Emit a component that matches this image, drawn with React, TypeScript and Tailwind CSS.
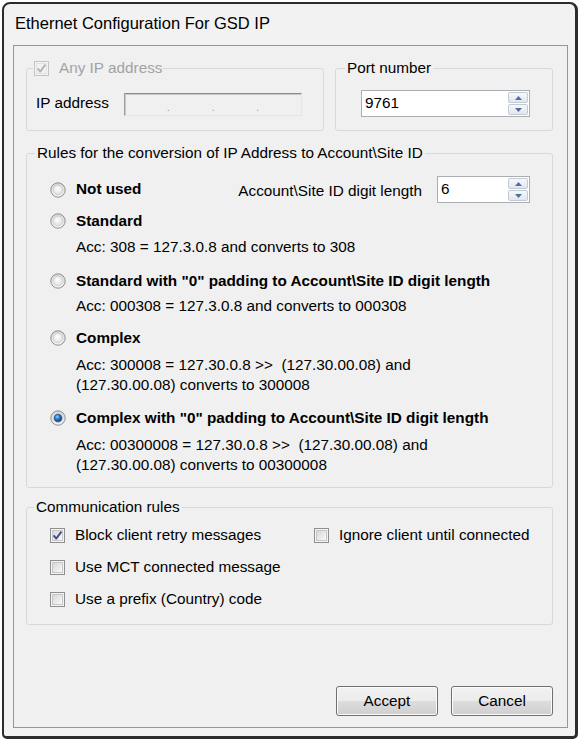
import React from "react";

function Radio({ checked = false }: { checked?: boolean }) {
    return (
        <svg width="16" height="16" viewBox="0 0 16 16" className="shrink-0">
            <defs>
                <linearGradient id="radio-ring" x1="0" y1="0" x2="0" y2="1">
                    <stop offset="0" stopColor="#d4d4d4" />
                    <stop offset="1" stopColor="#f7f7f7" />
                </linearGradient>
                <radialGradient id="radio-in" cx="0.45" cy="0.4" r="0.6">
                    <stop offset="0" stopColor="#ffffff" />
                    <stop offset="1" stopColor="#dedede" />
                </radialGradient>
                <radialGradient id="radio-dot" cx="0.4" cy="0.35" r="0.65">
                    <stop offset="0" stopColor="#8fd0ff" />
                    <stop offset="0.45" stopColor="#2d7fd3" />
                    <stop offset="1" stopColor="#0d3c78" />
                </radialGradient>
            </defs>
            <circle cx="8" cy="8" r="7.2" fill="url(#radio-ring)" stroke="#8e8f8f" strokeWidth="1" />
            <circle cx="8" cy="8" r="4.8" fill="url(#radio-in)" stroke="#c4c4c4" strokeWidth="0.6" />
            {checked && <circle cx="8" cy="8" r="3.8" fill="url(#radio-dot)" stroke="#123f73" strokeWidth="0.6" />}
        </svg>
    );
}

function Check({ checked = false, disabled = false }: { checked?: boolean; disabled?: boolean }) {
    return (
        <svg width="15" height="15" viewBox="0 0 15 15" className="shrink-0">
            <defs>
                <linearGradient id="check-in" x1="0" y1="0" x2="1" y2="1">
                    <stop offset="0" stopColor="#d6d6d6" />
                    <stop offset="1" stopColor="#fbfbfb" />
                </linearGradient>
            </defs>
            <rect x="0.5" y="0.5" width="14" height="14" fill="#f4f4f4" stroke={disabled ? "#c4c4c4" : "#8e8f8f"} />
            <rect x="2.5" y="2.5" width="10" height="10" fill={disabled ? "#f2f2f2" : "url(#check-in)"} stroke={disabled ? "#e2e2e2" : "#c8c8c8"} />
            {checked && (
                <path
                    d="M3.6 7.4 L6.2 10.6 L11.4 3.6"
                    fill="none"
                    stroke={disabled ? "#b4b4b4" : "#3d4f86"}
                    strokeWidth="1.9"
                    strokeLinejoin="round"
                />
            )}
        </svg>
    );
}

function Spin() {
    return (
        <div className="ml-auto flex h-full w-[21px] flex-col gap-px py-px pr-px">
            <div className="flex flex-1 items-center justify-center rounded-[2px] border border-[#c3cad4] bg-[linear-gradient(#f6f8fa,#e2e7ee)]">
                <svg width="7" height="4" viewBox="0 0 7 4">
                    <path d="M0 4 L3.5 0 L7 4Z" fill="#4f6ea3" />
                </svg>
            </div>
            <div className="flex flex-1 items-center justify-center rounded-[2px] border border-[#c3cad4] bg-[linear-gradient(#f6f8fa,#e2e7ee)]">
                <svg width="7" height="4" viewBox="0 0 7 4">
                    <path d="M0 0 L3.5 4 L7 0Z" fill="#4f6ea3" />
                </svg>
            </div>
        </div>
    );
}

function Option({
    label,
    lines,
    checked,
    className,
    descGap,
}: {
    label: string;
    lines: string[];
    checked?: boolean;
    className: string;
    descGap: string;
}) {
    return (
        <div className={`flex items-start ${className}`}>
            <div className="mt-[2px]">
                <Radio checked={checked} />
            </div>
            <div className="ml-[10px]">
                <div className="font-bold leading-[20px]">{label}</div>
                <div className={`leading-[20px] ${descGap}`}>
                    {lines.map((l) => (
                        <div key={l}>{l}</div>
                    ))}
                </div>
            </div>
        </div>
    );
}

function CheckRow({ label, checked }: { label: string; checked?: boolean }) {
    return (
        <div className="flex h-[20px] items-center gap-[10px]">
            <Check checked={checked} />
            <span>{label}</span>
        </div>
    );
}

export default function App() {
    return (
        <div className="h-[741px] w-[581px] bg-white pb-[2px] pl-[2px] pr-[3px] pt-[2px] font-['Liberation_Sans',Arial,sans-serif] text-[15.3px] text-black">
            <div className="flex h-full flex-col rounded-b-[5px] rounded-t-[8px] border-2 border-b-[3px] border-r-[3px] border-[#2c2c2c] bg-[#f2f2f2]">
                {/* Title */}
                <div className="flex h-[41px] items-center pb-[3px] pl-[11px] text-[16.5px]">
                    Ethernet Configuration For GSD IP
                </div>

                {/* Client area */}
                <div className="mb-[8px] ml-[9px] mr-[7px] flex flex-1 flex-col border border-[#979797] bg-[#f0f0f0] pl-[12px] pr-[14px] pt-[13px]">
                    <div className="flex gap-[11px]">
                        <fieldset className="w-[298px] rounded-[3px] border border-[#d5d9dd]">
                            <legend className="ml-[6px] px-[1px] leading-[18px]">
                                <span className="flex items-center gap-[10px]">
                                    <Check checked disabled />
                                    <span className="text-[#a3a3a3]">Any IP address</span>
                                </span>
                            </legend>
                            <div className="flex h-[53px] items-center pb-[14px] pl-[9px] pt-[16px]">
                                <span className="w-[88px] pb-[3px] leading-[18px]">IP address</span>
                                <div className="flex h-[23px] w-[178px] items-end border border-b-[#e6e6e6] border-l-[#9f9f9f] border-r-[#e6e6e6] border-t-[#8c8c8c] bg-[#f0f0f0] pb-[2px] text-[10px] leading-[10px] text-[#9a9a9a] shadow-[inset_1px_1px_0_#c8c8c8]">
                                    <span className="flex-1" />
                                    <span>.</span>
                                    <span className="flex-1" />
                                    <span>.</span>
                                    <span className="flex-1" />
                                    <span>.</span>
                                    <span className="flex-1" />
                                </div>
                            </div>
                        </fieldset>

                        <fieldset className="flex-1 rounded-[3px] border border-[#d5d9dd]">
                            <legend className="ml-[9px] px-[2px] leading-[18px]">Port number</legend>
                            <div className="pb-[13px] pl-[25px] pt-[13px]">
                                <div className="flex h-[27px] w-[169px] items-center border border-[#abadb3] bg-white pl-[3px]">
                                    <span>9761</span>
                                    <Spin />
                                </div>
                            </div>
                        </fieldset>
                    </div>

                    {/* Rules */}
                    <fieldset className="mt-[13px] rounded-[3px] border border-[#d5d9dd]">
                        <legend className="ml-[8px] px-[2px] leading-[18px]">
                            Rules for the conversion of IP Address to Account\Site ID
                        </legend>
                        <div className="pb-[12px] pl-[23px] pr-[22px] pt-[14px]">
                            <div className="flex h-[27px] items-center">
                                <Radio />
                                <span className="ml-[10px] font-bold">Not used</span>
                                <span className="ml-auto pt-[3px]">Account\Site ID digit length</span>
                                <div className="ml-[15px] flex h-[27px] w-[93px] items-center border border-[#abadb3] bg-white pl-[3px]">
                                    <span className="self-start pt-[1px]">6</span>
                                    <Spin />
                                </div>
                            </div>
                            <Option
                                className="mt-[8px]"
                                descGap="mt-[6px]"
                                label="Standard"
                                lines={["Acc: 308 = 127.3.0.8 and converts to 308"]}
                            />
                            <Option
                                className="mt-[14px]"
                                descGap="mt-[5px]"
                                label={'Standard with "0" padding to Account\\Site ID digit length'}
                                lines={["Acc: 000308 = 127.3.0.8 and converts to 000308"]}
                            />
                            <Option
                                className="mt-[12px]"
                                descGap="mt-[7px]"
                                label="Complex"
                                lines={[
                                    "Acc: 300008 = 127.30.0.8 >>\u00a0 (127.30.00.08) and",
                                    "(127.30.00.08) converts to 300008",
                                ]}
                            />
                            <Option
                                className="mt-[13px]"
                                descGap="mt-[7px]"
                                checked
                                label={'Complex with "0" padding to Account\\Site ID digit length'}
                                lines={[
                                    "Acc: 00300008 = 127.30.0.8 >>\u00a0 (127.30.00.08) and",
                                    "(127.30.00.08) converts to 00300008",
                                ]}
                            />
                        </div>
                    </fieldset>

                    {/* Communication rules */}
                    <fieldset className="mt-[10px] rounded-[3px] border border-[#d5d9dd]">
                        <legend className="ml-[7px] px-[2px] leading-[18px]">Communication rules</legend>
                        <div className="grid grid-cols-[264px_1fr] gap-y-[12px] pb-[15px] pl-[23px] pt-[9px]">
                            <CheckRow label="Block client retry messages" checked />
                            <CheckRow label="Ignore client until connected" />
                            <CheckRow label="Use MCT connected message" />
                            <div />
                            <CheckRow label="Use a prefix (Country) code" />
                        </div>
                    </fieldset>

                    {/* Buttons */}
                    <div className="mt-auto flex justify-end gap-[13px] pb-[11px]">
                        <button className="h-[30px] w-[102px] rounded-[3px] border border-[#707070] bg-[linear-gradient(#f2f2f2_0%,#ebebeb_50%,#dddddd_50%,#cfcfcf_100%)] shadow-[inset_0_0_0_1px_#fbfbfb]">
                            Accept
                        </button>
                        <button className="h-[30px] w-[102px] rounded-[3px] border border-[#707070] bg-[linear-gradient(#f2f2f2_0%,#ebebeb_50%,#dddddd_50%,#cfcfcf_100%)] shadow-[inset_0_0_0_1px_#fbfbfb]">
                            Cancel
                        </button>
                    </div>
                </div>
            </div>
        </div>
    );
}
